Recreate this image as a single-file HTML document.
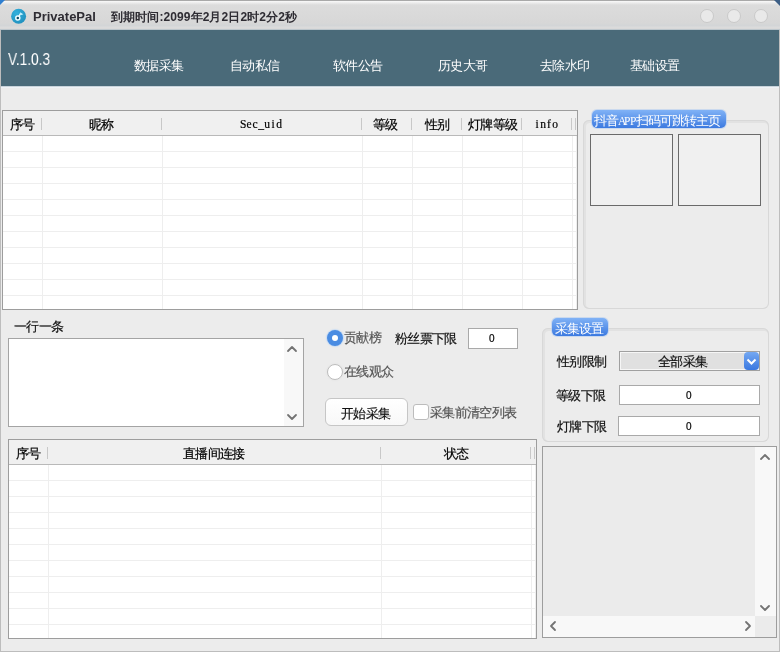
<!DOCTYPE html>
<html><head><meta charset="utf-8">
<style>
*{margin:0;padding:0;box-sizing:border-box}
html,body{width:780px;height:652px;overflow:hidden;-webkit-font-smoothing:antialiased;background:#ececec;font-family:"Liberation Sans",sans-serif;color:#000}
.a{position:absolute}
.t{position:absolute;will-change:transform;-webkit-text-stroke:0.2px currentColor;font-size:13px;line-height:13px;letter-spacing:-0.7px;white-space:nowrap}
.mono{font-family:"Liberation Serif",serif;font-size:11.5px;letter-spacing:0}
.hl{position:absolute;height:1px;background:#e8e8e8}
.vl{position:absolute;width:1px;background:#e8e8e8}
.div{position:absolute;width:1px;height:12px;background:#c8c8c8}
.rnd{position:absolute;border-radius:6px;box-shadow:inset 0 0 0 1px #d8d8d8, inset 1px 1px 0 2px #e2e2e2}
.lbl{position:absolute;will-change:transform;height:18px;border-radius:5px;background:linear-gradient(#80b2f6,#3c7ae0);box-shadow:0 0 0 1px rgba(180,205,240,0.6);color:#fff;font-size:13px;letter-spacing:-1px;line-height:21px;white-space:nowrap;padding-left:2px}
.inp{position:absolute;background:#fff;border:1px solid #a9a9a9}
.chev{position:absolute}
</style></head><body>
<!-- title bar -->
<div class="a" style="left:0;top:0;width:780px;height:30px;background:linear-gradient(#a9a9a9 0,#a9a9a9 1px,#fafafa 1px,#f2f2f2 2px,#dcdcdc 5px,#d7d7d7 23px,#d2d5d7 26px,#dcdcdc 27px,#d8d8d8 29px,#bcc6cc 29px,#bcc6cc 30px)"></div>
<div class="a" style="left:0;top:0;width:0;height:0;border-top:5px solid #2f7fd0;border-right:5px solid transparent"></div>
<div class="a" style="left:774px;top:0;width:0;height:0;border-top:6px solid #3d5f86;border-left:6px solid transparent"></div>
<svg class="a" style="left:10px;top:8px" width="17" height="17" viewBox="0 0 17 17">
<defs><radialGradient id="ig" cx="0.35" cy="0.3" r="0.8"><stop offset="0" stop-color="#33b0dc"/><stop offset="1" stop-color="#1f8fbd"/></radialGradient></defs>
<circle cx="8.6" cy="8.2" r="7.5" fill="url(#ig)"/>
<path d="M8.6 8.8 L10.6 5.4" stroke="#e8fbff" stroke-width="1.4" fill="none"/>
<path d="M10 4.2 L13.4 6.3 L10.6 7.2 Z" fill="#c9f3ff"/>
<circle cx="7.8" cy="9.9" r="2" fill="#0f4d69" stroke="#f0fcff" stroke-width="1.5"/>
</svg>
<div class="t" style="left:33px;top:10px;font-size:13px;line-height:13px;letter-spacing:0;font-weight:bold;-webkit-text-stroke:0;color:#2e2c33">PrivatePal</div>
<div class="t" style="left:111px;top:11px;font-size:12px;line-height:12px;letter-spacing:0.1px;font-weight:bold;-webkit-text-stroke:0;color:#2e2c33">到期时间:2099年2月2日2时2分2秒</div>
<div class="a" style="left:700px;top:9px;width:14px;height:14px;border-radius:50%;border:1.5px solid #c9c9c9;background:#e9e9e9"></div>
<div class="a" style="left:727px;top:9px;width:14px;height:14px;border-radius:50%;border:1.5px solid #c9c9c9;background:#e9e9e9"></div>
<div class="a" style="left:754px;top:9px;width:14px;height:14px;border-radius:50%;border:1.5px solid #c9c9c9;background:#e9e9e9"></div>

<!-- header -->
<div class="a" style="left:1px;top:30px;width:778px;height:56px;background:#4a6a79"></div>
<div class="t" style="left:8px;top:51px;font-size:16.5px;line-height:16.5px;color:#fff;-webkit-text-stroke:0;letter-spacing:0;transform:scaleX(0.83);transform-origin:0 0">V.1.0.3</div>
<div class="t" style="left:134px;top:59px;color:#fff;-webkit-text-stroke:0">数据采集</div>
<div class="t" style="left:230px;top:59px;color:#fff;-webkit-text-stroke:0">自动私信</div>
<div class="t" style="left:333px;top:59px;color:#fff;-webkit-text-stroke:0">软件公告</div>
<div class="t" style="left:438px;top:59px;color:#fff;-webkit-text-stroke:0">历史大哥</div>
<div class="t" style="left:540px;top:59px;color:#fff;-webkit-text-stroke:0">去除水印</div>
<div class="t" style="left:630px;top:59px;color:#fff;-webkit-text-stroke:0">基础设置</div>

<div class="a" style="left:1px;top:86px;width:778px;height:1px;background:#c9d3da"></div>
<div class="a" style="left:1px;top:87px;width:778px;height:1px;background:#eef2f6"></div>
<!-- window borders -->
<div class="a" style="left:0;top:30px;width:1px;height:622px;background:#bdbdbd"></div>
<div class="a" style="left:779px;top:30px;width:1px;height:622px;background:#bdbdbd"></div>
<div class="a" style="left:0;top:651px;width:780px;height:1px;background:#bdbdbd"></div>

<!-- table 1 -->
<div class="a" id="t1" style="left:2px;top:110px;width:576px;height:200px;border:1px solid #9d9d9d;background:#fff;overflow:hidden">
  <div class="a" style="left:0;top:0;width:574px;height:25px;background:#f0f0f0;border-bottom:1px solid #b9b9b9"></div>
</div>
<div class="hl" style="left:3px;top:151px;width:574px;background:#eeeeee"></div>
<div class="hl" style="left:3px;top:167px;width:574px;background:#eeeeee"></div>
<div class="hl" style="left:3px;top:183px;width:574px;background:#eeeeee"></div>
<div class="hl" style="left:3px;top:199px;width:574px;background:#eeeeee"></div>
<div class="hl" style="left:3px;top:215px;width:574px;background:#eeeeee"></div>
<div class="hl" style="left:3px;top:231px;width:574px;background:#eeeeee"></div>
<div class="hl" style="left:3px;top:247px;width:574px;background:#eeeeee"></div>
<div class="hl" style="left:3px;top:263px;width:574px;background:#eeeeee"></div>
<div class="hl" style="left:3px;top:279px;width:574px;background:#eeeeee"></div>
<div class="hl" style="left:3px;top:295px;width:574px;background:#eeeeee"></div>
<div class="vl" style="left:42px;top:136px;height:173px;background:#eeeeee"></div>
<div class="div" style="left:41px;top:118px;height:12px"></div>
<div class="vl" style="left:162px;top:136px;height:173px;background:#eeeeee"></div>
<div class="div" style="left:161px;top:118px;height:12px"></div>
<div class="vl" style="left:362px;top:136px;height:173px;background:#eeeeee"></div>
<div class="div" style="left:361px;top:118px;height:12px"></div>
<div class="vl" style="left:412px;top:136px;height:173px;background:#eeeeee"></div>
<div class="div" style="left:411px;top:118px;height:12px"></div>
<div class="vl" style="left:462px;top:136px;height:173px;background:#eeeeee"></div>
<div class="div" style="left:461px;top:118px;height:12px"></div>
<div class="vl" style="left:522px;top:136px;height:173px;background:#eeeeee"></div>
<div class="div" style="left:521px;top:118px;height:12px"></div>
<div class="vl" style="left:572px;top:136px;height:173px;background:#eeeeee"></div>
<div class="div" style="left:571px;top:118px;height:12px"></div>
<div class="vl" style="left:576px;top:136px;height:173px;background:#eeeeee"></div>
<div class="div" style="left:575px;top:118px;height:12px"></div>
<div class="t " style="left:10px;top:118px;color:#000">序号</div>
<div class="t " style="left:89px;top:118px;color:#000">昵称</div>
<div class="t mono" style="left:240px;top:118px;color:#000"><span style="display:inline-block;width:6px;text-align:center">S</span><span style="display:inline-block;width:6px;text-align:center">e</span><span style="display:inline-block;width:6px;text-align:center">c</span><span style="display:inline-block;width:6px;text-align:center">_</span><span style="display:inline-block;width:6px;text-align:center">u</span><span style="display:inline-block;width:6px;text-align:center">i</span><span style="display:inline-block;width:6px;text-align:center">d</span></div>
<div class="t " style="left:373px;top:118px;color:#000">等级</div>
<div class="t " style="left:425px;top:118px;color:#000">性别</div>
<div class="t " style="left:468px;top:118px;color:#000">灯牌等级</div>
<div class="t mono" style="left:534px;top:118px;color:#000"><span style="display:inline-block;width:6px;text-align:center">i</span><span style="display:inline-block;width:6px;text-align:center">n</span><span style="display:inline-block;width:6px;text-align:center">f</span><span style="display:inline-block;width:6px;text-align:center">o</span></div>

<!-- right group 1 -->
<div class="rnd" style="left:583px;top:120px;width:186px;height:189px"></div>
<div class="a" style="left:590px;top:134px;width:83px;height:72px;border:1px solid #6a6a6a;background:#f0f0f0"></div>
<div class="a" style="left:678px;top:134px;width:83px;height:72px;border:1px solid #6a6a6a;background:#f0f0f0"></div>
<div class="lbl" style="left:592px;top:110px;width:134px">抖音<span style="display:inline-block;width:6px;text-align:center;font-family:'Liberation Serif',serif;font-size:11.5px;letter-spacing:0">A</span><span style="display:inline-block;width:6px;text-align:center;font-family:'Liberation Serif',serif;font-size:11.5px;letter-spacing:0">P</span><span style="display:inline-block;width:6px;text-align:center;font-family:'Liberation Serif',serif;font-size:11.5px;letter-spacing:0">P</span>扫码可跳转主页</div>

<!-- 一行一条 -->
<div class="t" style="left:14px;top:320px;color:#111">一行一条</div>
<div class="inp" style="left:8px;top:338px;width:296px;height:89px;border-color:#a4a4a4"></div>
<div class="a" style="left:284px;top:339px;width:19px;height:87px;background:#f8f8f8"></div>

<!-- radios -->
<div class="a" style="left:327px;top:330px;width:16px;height:16px;border-radius:50%;background:#4a8ce2;box-shadow:0 0 1px 1px rgba(170,205,250,0.55)"></div>
<div class="a" style="left:332px;top:335px;width:6px;height:6px;border-radius:50%;background:#fff"></div>
<div class="t" style="left:344px;top:331px;color:#555">贡献榜</div>
<div class="a" style="left:327px;top:364px;width:16px;height:16px;border-radius:50%;background:#fff;border:1px solid #bdbdbd;box-shadow:0 0 1px 1px rgba(230,230,230,0.8)"></div>
<div class="t" style="left:344px;top:365px;color:#555">在线观众</div>
<div class="t" style="left:395px;top:332px;color:#111">粉丝票下限</div>
<div class="inp" style="left:468px;top:328px;width:50px;height:21px"></div>
<div class="t" style="left:489px;top:334px;font-size:10px;line-height:10px;letter-spacing:0;color:#000">0</div>

<div class="a" style="left:325px;top:398px;width:83px;height:28px;border-radius:6px;border:1px solid #c6c6c6;background:linear-gradient(#fff,#f8f8f8)"></div>
<div class="t" style="left:341px;top:407px;color:#111">开始采集</div>
<div class="a" style="left:413px;top:404px;width:16px;height:16px;border-radius:3px;border:1px solid #bcbcbc;background:#fff"></div>
<div class="t" style="left:430px;top:406px;color:#555">采集前清空列表</div>

<!-- group 2 -->
<div class="rnd" style="left:542px;top:328px;width:227px;height:114px"></div>
<div class="lbl" style="left:552px;top:318px;width:56px;padding-left:2.5px">采集设置</div>
<div class="t" style="left:557px;top:355px;color:#111">性别限制</div>
<div class="a" style="left:619px;top:351px;width:141px;height:20px;border:1px solid #a0a0a0;background:#e0e0e0;box-shadow:inset 0 0 0 1px #f6f6f6"></div>
<div class="a" style="left:744px;top:352px;width:15px;height:18px;border-radius:4px;background:linear-gradient(#74a8f2,#3a78e0)"></div>
<svg class="a" style="left:744px;top:352px" width="15" height="18"><path d="M3.5 7.5 L7.5 11.5 L11.5 7.5" stroke="#fff" stroke-width="2" fill="none"/></svg>
<div class="t" style="left:658px;top:355px;color:#111">全部采集</div>
<div class="t" style="left:556px;top:389px;color:#111">等级下限</div>
<div class="inp" style="left:619px;top:385px;width:141px;height:20px"></div>
<div class="t" style="left:686px;top:391px;font-size:10px;line-height:10px;letter-spacing:0;color:#000">0</div>
<div class="t" style="left:557px;top:420px;color:#111">灯牌下限</div>
<div class="inp" style="left:618px;top:416px;width:142px;height:20px"></div>
<div class="t" style="left:686px;top:422px;font-size:10px;line-height:10px;letter-spacing:0;color:#000">0</div>

<!-- table 2 -->
<div class="a" id="t2" style="left:8px;top:439px;width:529px;height:200px;border:1px solid #9d9d9d;background:#fff;overflow:hidden">
  <div class="a" style="left:0;top:0;width:527px;height:25px;background:#f0f0f0;border-bottom:1px solid #b9b9b9"></div>
</div>

<div class="hl" style="left:9px;top:480px;width:527px;background:#eeeeee"></div>
<div class="hl" style="left:9px;top:496px;width:527px;background:#eeeeee"></div>
<div class="hl" style="left:9px;top:512px;width:527px;background:#eeeeee"></div>
<div class="hl" style="left:9px;top:528px;width:527px;background:#eeeeee"></div>
<div class="hl" style="left:9px;top:544px;width:527px;background:#eeeeee"></div>
<div class="hl" style="left:9px;top:560px;width:527px;background:#eeeeee"></div>
<div class="hl" style="left:9px;top:576px;width:527px;background:#eeeeee"></div>
<div class="hl" style="left:9px;top:592px;width:527px;background:#eeeeee"></div>
<div class="hl" style="left:9px;top:608px;width:527px;background:#eeeeee"></div>
<div class="hl" style="left:9px;top:624px;width:527px;background:#eeeeee"></div>
<div class="vl" style="left:48px;top:465px;height:173px;background:#eeeeee"></div>
<div class="div" style="left:47px;top:447px;height:12px"></div>
<div class="vl" style="left:381px;top:465px;height:173px;background:#eeeeee"></div>
<div class="div" style="left:380px;top:447px;height:12px"></div>
<div class="vl" style="left:531px;top:465px;height:173px;background:#eeeeee"></div>
<div class="div" style="left:530px;top:447px;height:12px"></div>
<div class="vl" style="left:535px;top:465px;height:173px;background:#eeeeee"></div>
<div class="div" style="left:534px;top:447px;height:12px"></div>
<div class="t " style="left:16px;top:447px;color:#000">序号</div>
<div class="t " style="left:183px;top:447px;color:#000">直播间连接</div>
<div class="t " style="left:444px;top:447px;color:#000">状态</div>
<!-- right box -->
<div class="a" style="left:542px;top:446px;width:235px;height:192px;border:1px solid #9d9d9d;background:#ebebeb"></div>
<div class="a" style="left:755px;top:447px;width:21px;height:169px;background:#f8f8f8"></div>
<div class="a" style="left:543px;top:616px;width:212px;height:21px;background:#f8f8f8"></div>

<svg class="a" style="left:0;top:0" width="780" height="652">
<g stroke="#737373" stroke-width="1.8" fill="none" stroke-linecap="round" stroke-linejoin="round">
<path d="M288 351 L292 347 L296 351"/>
<path d="M288 415 L292 419 L296 415"/>
<path d="M761 459 L765 455 L769 459"/>
<path d="M761 606 L765 610 L769 606"/>
<path d="M555 622 L551 626 L555 630"/>
<path d="M746 622 L750 626 L746 630"/>
</g>
</svg>
</body></html>
